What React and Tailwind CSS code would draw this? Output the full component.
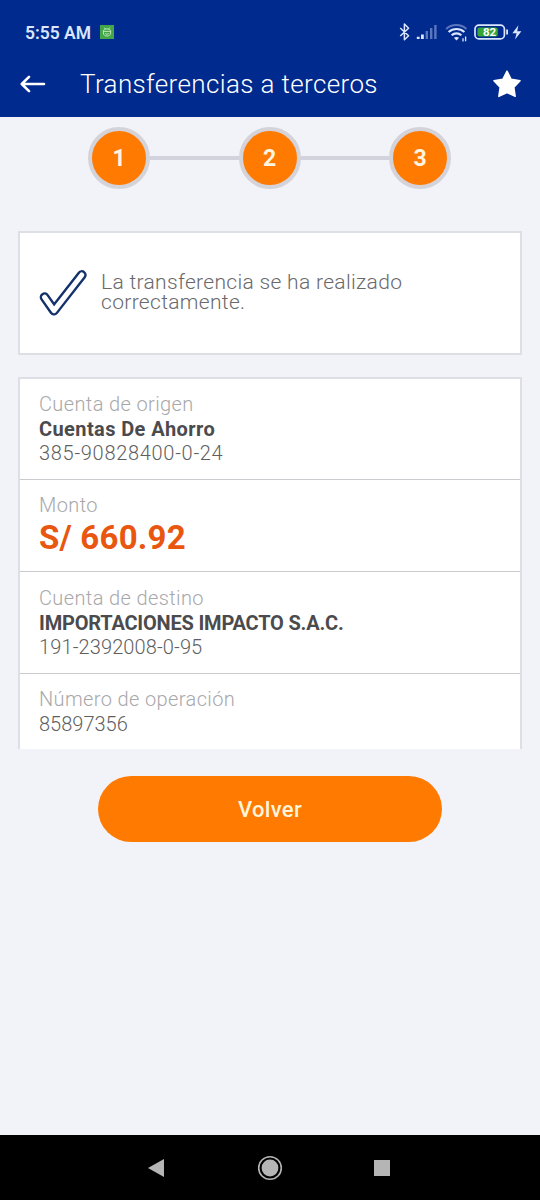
const steps = [1, 2, 3];

const BackArrow = () => (
  <svg width="26" height="20" viewBox="0 0 26 20" fill="none" stroke="#fff" strokeWidth="2.6" strokeLinecap="round" strokeLinejoin="round">
    <path d="M24 10H2M9 2.8L1.8 10L9 17.2" />
  </svg>
);

const Star = () => (
  <svg width="30" height="30" viewBox="0 0 30 30" fill="#fff" stroke="#fff" strokeWidth="1.4" strokeLinejoin="round">
    <path d="M15 2L19.2 10.2L28.1 11.7L21.9 18.3L23.2 27.4L15 23.5L6.8 27.4L8.1 18.3L1.9 11.7L10.8 10.2Z" />
  </svg>
);

const AndroidBadge = () => (
  <svg width="14" height="14" viewBox="0 0 14 14" fill="none" stroke="#c8ecc0" strokeWidth="0.9">
    <rect width="14" height="14" fill="#43a74a" stroke="none" />
    <path d="M3.2 6.4H10.8M3.4 6.4C3.4 4.6 5 3.9 7 3.9S10.6 4.6 10.6 6.4V8C10.6 10 9 11 7 11S3.4 10 3.4 8ZM4.4 2.6L5.4 4.2M9.6 2.6L8.6 4.2M5.2 8.4C5.8 9.4 8.2 9.4 8.8 8.4" />
  </svg>
);

const StatusIcons = () => (
  <svg width="126" height="20" viewBox="0 0 126 20" fill="none">
    {/* bluetooth */}
    <path d="M1.2 6L9.6 13.8L5.4 17.8V2L9.6 6.2L1.2 14" stroke="#dce6ff" strokeWidth="1.5" strokeLinejoin="round" />
    {/* signal */}
    <path d="M19.2 14.8V17M23.4 12.4V17" stroke="#dce6ff" strokeWidth="2.8" />
    <path d="M27.8 9V17M32.2 6V17M36.4 3V17" stroke="#5a76bd" strokeWidth="2.4" />
    {/* wifi */}
    <path d="M47.2 7C52.8 1.8 61.8 1.8 67.4 7" stroke="#5a76bd" strokeWidth="2" />
    <path d="M49.6 10C54.2 6 60.8 6 65.4 10M52.6 13.2C55.4 10.8 59.6 10.8 62.4 13.2" stroke="#dce6ff" strokeWidth="2.1" />
    <path d="M54.9 15.8Q57.5 14 60.1 15.8L57.5 18.6Z" fill="#dce6ff" />
    <path d="M64 16.2V19.4M66.6 14.4V19.2" stroke="#dce6ff" strokeWidth="1.3" />
    {/* battery */}
    <rect x="76" y="3.1" width="29.4" height="13.8" rx="4" stroke="#dce6ff" strokeWidth="1.7" />
    <rect x="78.4" y="5.4" width="20.4" height="9.2" rx="2" fill="#36a536" />
    <path d="M108.1 7.4V12.6" stroke="#dce6ff" strokeWidth="1.8" />
    <text x="90.5" y="14.2" textAnchor="middle" fill="#fff" fontSize="11.5" fontWeight="700" fontFamily="Roboto, sans-serif">82</text>
    {/* charging bolt */}
    <path d="M119.4 3.2L113.4 11.2H117.6L116 17.6L122.4 9.2H118.2Z" fill="#dce6ff" />
  </svg>
);

const CheckMark = () => (
  <svg width="50" height="50" viewBox="0 0 50 50" fill="none" strokeLinecap="round" strokeLinejoin="round">
    <path d="M6.6 29.2L16 42.6L43.8 7" stroke="#14316c" strokeWidth="9.8" />
    <path d="M6.6 29.2L16 42.6L43.8 7" stroke="#fff" strokeWidth="5" />
  </svg>
);

const Row = ({ label, children, className }) => (
  <div className={`px-[19px] border-[#c9cbcf] text-[20px] leading-[24.5px] font-light text-[#5f5f61] ${className}`}>
    <div className="text-[#a8a8aa] tracking-[0.38px]">{label}</div>
    {children}
  </div>
);

const App = () => {
  return (
    <div className="w-[540px] h-[1200px] flex flex-col bg-[#f2f3f8] font-['Roboto',sans-serif] overflow-hidden">
      <header className="h-[117px] shrink-0 bg-[#002a8d] text-white">
        <div className="flex items-center h-[52px] pt-[12px] pl-[25px] pr-[15px]">
          <span className="text-[17.5px] font-semibold text-[#dce6ff] leading-5 pt-px">5:55 AM</span>
          <div className="ml-[9px]"><AndroidBadge /></div>
          <div className="ml-auto"><StatusIcons /></div>
        </div>
        <div className="flex items-center h-[64px] pl-5 pr-[18px]">
          <BackArrow />
          <h1 className="ml-[34px] text-[26px] leading-8 font-light tracking-[0.37px]">Transferencias a terceros</h1>
          <div className="ml-auto"><Star /></div>
        </div>
      </header>

      <div className="flex items-center mt-[10px] ml-[88px] mr-[89px] h-[62px] shrink-0">
        {steps.map((step) => (
          <div key={step} className={step > 1 ? 'flex flex-1 items-center' : 'flex items-center'}>
            {step > 1 && <div className="flex-1 h-1 bg-[#d2d3dc]" />}
            <div className="w-[62px] h-[62px] pt-0.5 rounded-full border-4 border-[#d5d3da] bg-[#ff7a00] flex items-center justify-center text-[#fff5e0] text-[23px] font-bold">
              {step}
            </div>
          </div>
        ))}
      </div>

      <div className="mx-[18px] mt-[42px] h-[124px] shrink-0 bg-white border-2 border-[#dcdfe3] flex items-center pl-[18px]">
        <CheckMark />
        <p className="ml-[13px] -mt-[3px] w-[330px] text-[21px] leading-5 font-light text-[#69696b] tracking-[0.32px]">
          La transferencia se ha realizado correctamente.
        </p>
      </div>

      <div className="mx-[18px] mt-[22px] h-[372px] shrink-0 bg-white border-2 border-b-0 border-[#dcdfe3]">
        <Row label="Cuenta de origen" className="h-[101px] pt-[13px] border-b">
          <div className="font-bold text-[#4b4b4e] tracking-[0.4px]">Cuentas De Ahorro</div>
          <div className="tracking-[0.7px]">385-90828400-0-24</div>
        </Row>
        <Row label="Monto" className="h-[92px] pt-[13px] border-b">
          <div className="text-[33px] leading-10 font-bold text-[#e8560f] tracking-[0.2px]">S/ 660.92</div>
        </Row>
        <Row label="Cuenta de destino" className="h-[102px] pt-[14px] border-b">
          <div className="font-bold text-[#4b4b4e] tracking-[-0.2px]">IMPORTACIONES IMPACTO S.A.C.</div>
          <div className="tracking-[0.12px]">191-2392008-0-95</div>
        </Row>
        <Row label="Número de operación" className="h-[75px] pt-[13px]">
          <div>85897356</div>
        </Row>
      </div>

      <button className="mx-[98px] mt-[27px] h-[66px] shrink-0 rounded-full bg-[#ff7a00] text-[#fff5d8] text-[22px] font-medium tracking-[0.3px]">
        Volver
      </button>

      <nav className="mt-auto h-[65px] shrink-0 bg-black flex items-center justify-between pl-[148px] pr-[150px]">
        <svg width="18" height="20" viewBox="0 0 18 20" fill="#b5b5b5">
          <path d="M0 10L16 1V19Z" />
        </svg>
        <svg width="26" height="26" viewBox="0 0 26 26" fill="none">
          <circle cx="13" cy="13" r="11.3" stroke="#b5b5b5" strokeWidth="1.6" />
          <circle cx="13" cy="13" r="8.4" fill="#b5b5b5" />
        </svg>
        <div className="w-4 h-4 bg-[#b5b5b5]" />
      </nav>
    </div>
  );
};

export default App;
